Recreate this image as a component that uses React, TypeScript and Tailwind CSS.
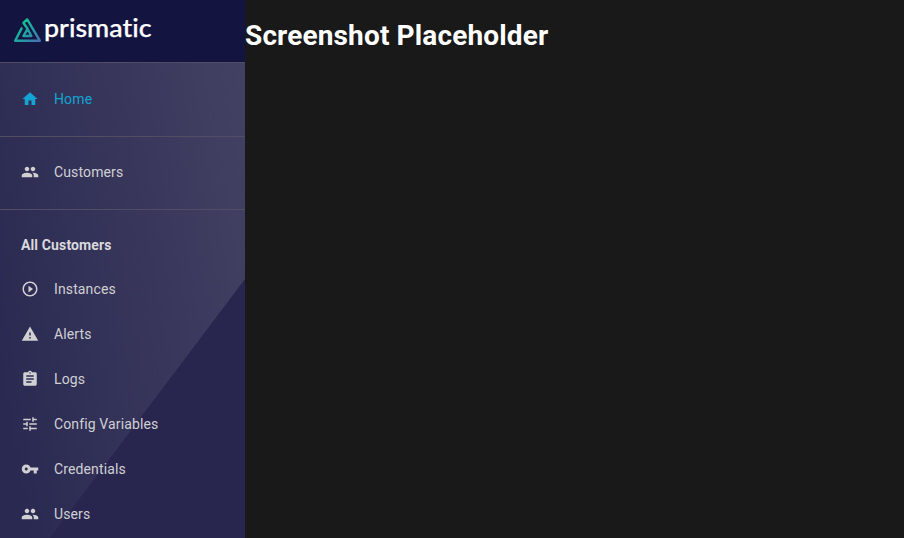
import {
  MdAssignment,
  MdHome,
  MdPeople,
  MdPlayCircleOutline,
  MdTune,
  MdVpnKey,
  MdWarning,
} from "react-icons/md";
import type { IconType } from "react-icons";

function Logo() {
  return (
    <div className="flex h-[62px] shrink-0 items-start bg-[#141441] pl-[13px] pt-[10px]">
      <svg width="145" height="44" viewBox="0 -7 145 44" fill="none">
        <defs>
          <linearGradient id="prism" x1="6" y1="2" x2="26" y2="26" gradientUnits="userSpaceOnUse">
            <stop offset="0" stopColor="#0fce8c" />
            <stop offset="0.5" stopColor="#1fa3a4" />
            <stop offset="1" stopColor="#4a6bb5" />
          </linearGradient>
        </defs>
        <g stroke="url(#prism)" strokeWidth="2.4" strokeLinejoin="round" strokeLinecap="round">
          <path d="M8.6 11.4 L2.2 23.7 H26.8 L14.2 2.4 L10.4 5.8 L14.6 11.8 L10.4 19 H18.4 L14.2 11.2" />
        </g>
        <text
          x="31"
          y="19.6"
          fill="#fff"
          stroke="#fff"
          strokeWidth="0.25"
          textLength="107.5"
          lengthAdjust="spacingAndGlyphs"
          className="font-['Lato',sans-serif] text-[24.5px] font-medium [font-variant-ligatures:none]"
        >
          prismatic
        </text>
      </svg>
    </div>
  );
}

function NavItem({ icon: Icon, label, active = false }: { icon: IconType; label: string; active?: boolean }) {
  return (
    <a className={`flex h-[45px] items-center gap-[15px] pl-[21px] ${active ? "text-[#13a4d3]" : "text-[#d0d0d3]"}`}>
      <Icon size={18} className="mt-px" />
      <span className="text-sm tracking-[0.13px]">{label}</span>
    </a>
  );
}

const customerLinks: { icon: IconType; label: string }[] = [
  { icon: MdPlayCircleOutline, label: "Instances" },
  { icon: MdWarning, label: "Alerts" },
  { icon: MdAssignment, label: "Logs" },
  { icon: MdTune, label: "Config Variables" },
  { icon: MdVpnKey, label: "Credentials" },
  { icon: MdPeople, label: "Users" },
];

export default function App() {
  return (
    <div className="flex h-screen overflow-hidden bg-[#191919] font-['Roboto',sans-serif]">
      <aside className="flex w-[245px] shrink-0 flex-col">
        <Logo />
        <nav className="relative flex-1 overflow-hidden bg-[linear-gradient(80deg,#2a2951_8%,#434163)]">
          <div className="absolute inset-0 bg-[#28264f] [clip-path:polygon(245px_217px,245px_476px,50px_476px)]" />
          <div className="relative">
            <div className="border-t border-[#514e63] pb-[15px] pt-[13px]">
              <NavItem icon={MdHome} label="Home" active />
            </div>
            <div className="border-y border-[#514e63] pb-[15px] pt-[12px]">
              <NavItem icon={MdPeople} label="Customers" />
            </div>
            <h2 className="pl-[21px] pt-[25px] text-sm font-bold tracking-[0.13px] text-[#d9d9dc]">All Customers</h2>
            <div className="pt-[11px]">
              {customerLinks.map((link) => (
                <NavItem key={link.label} icon={link.icon} label={link.label} />
              ))}
            </div>
          </div>
        </nav>
      </aside>
      <main className="flex-1 pt-[19px]">
        <h1 className="text-[28px] font-bold leading-[34px] tracking-[0.14px] text-white">Screenshot Placeholder</h1>
      </main>
    </div>
  );
}
